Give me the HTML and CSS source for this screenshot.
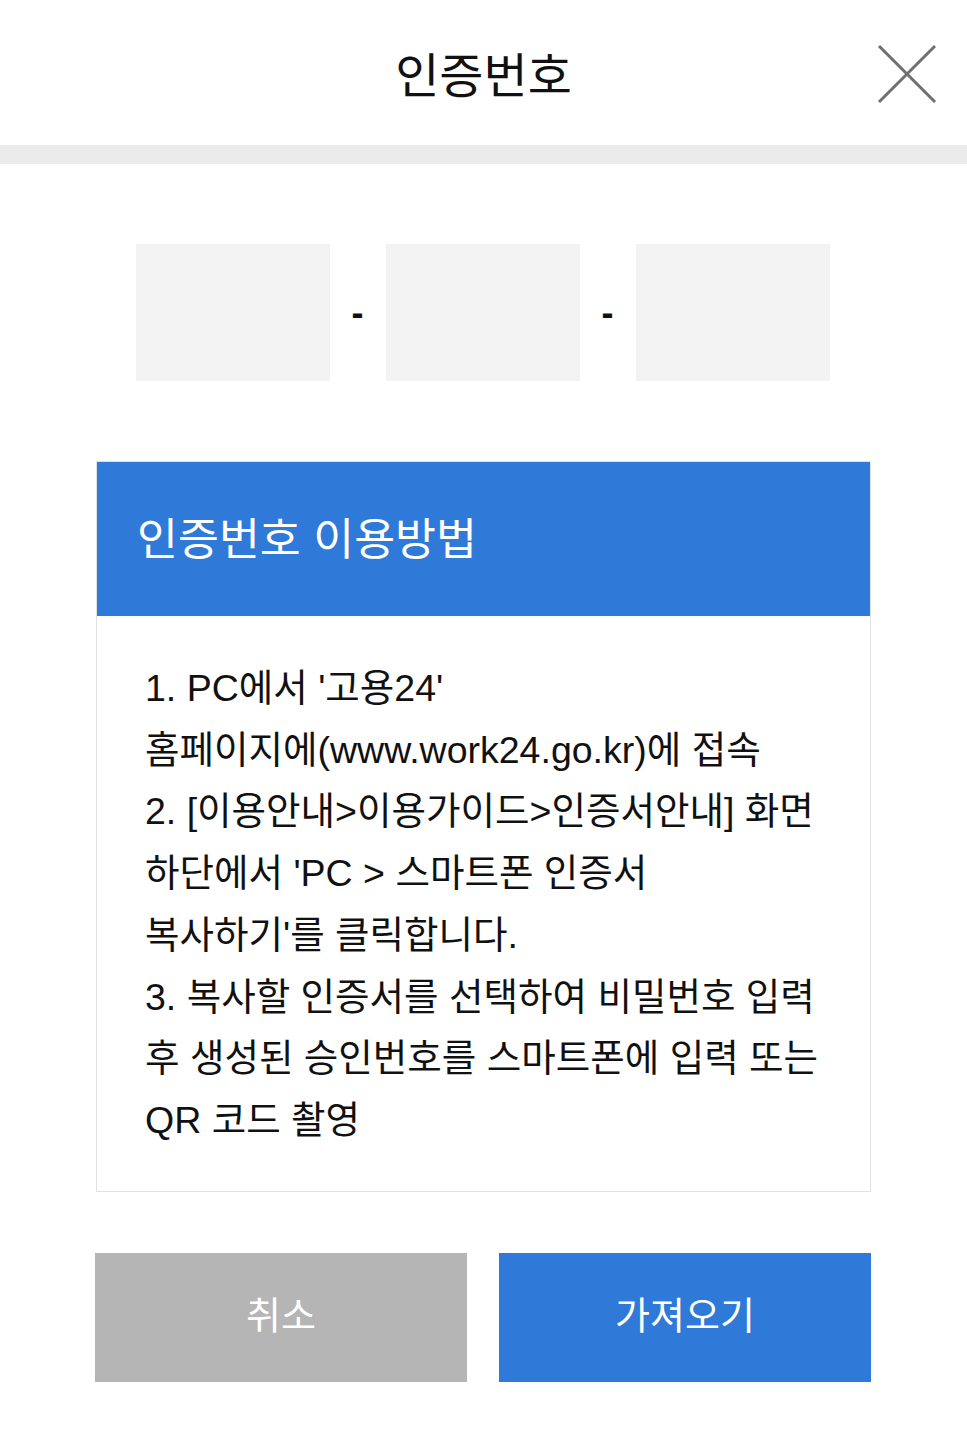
FILE: index.html
```html
<!doctype html>
<html lang="ko">
<head>
<meta charset="UTF-8">
<title>인증번호</title>
<meta name="viewport" content="width=device-width, initial-scale=1.0">
<link rel="stylesheet" href="styles.css">
</head>
<body>
  <!--상단 제목-->
  <div class="top-bar">
    <h1 class="top-title">인증번호</h1>
    <button class="btn-close" type="button" aria-label="닫기">
      <svg width="60" height="60" viewBox="0 0 60 60">
        <path d="M2 2 L58 58 M58 2 L2 58" stroke="#6f6f6f" stroke-width="3" fill="none"/>
      </svg>
    </button>
  </div>
  <div class="top-line"></div>

  <!--인증번호 입력-->
  <div class="code-row">
    <input class="code-box" type="text" maxlength="4">
    <span class="code-dash">-</span>
    <input class="code-box" type="text" maxlength="4">
    <span class="code-dash">-</span>
    <input class="code-box" type="text" maxlength="4">
  </div>

  <!--이용방법 안내-->
  <div class="guide">
    <div class="guide-head">인증번호 이용방법</div>
    <div class="guide-body">
      <p>1. PC에서 '고용24' <span class="nobr">홈페이지에(www.work24.go.kr)에</span> 접속</p>
      <p>2. [이용안내&gt;이용가이드&gt;인증서안내] 화면 하단에서 'PC &gt; 스마트폰 인증서 복사하기'를 클릭합니다.</p>
      <p>3. 복사할 인증서를 선택하여 비밀번호 입력 후 생성된 승인번호를 스마트폰에 입력 또는 QR 코드 촬영</p>
    </div>
  </div>

  <!--하단 버튼-->
  <div class="btn-row">
    <button class="btn btn-cancel" type="button">취소</button>
    <button class="btn btn-ok" type="button">가져오기</button>
  </div>
</body>
</html>
```

FILE: styles.css
```css
*{
	box-sizing: border-box;
}
html, body{
	margin:0;
	padding:0;
	background:#fff;
}
body{
	width:967px;
	font-family:"Liberation Sans", "Noto Sans CJK KR", sans-serif;
	color:#111;
}
.top-bar{
	height:145px;
	display:flex;
	align-items:center;
	justify-content:center;
	position:relative;
}
.top-title{
	margin:0;
	font-family:"Noto Sans CJK KR", sans-serif;
	font-weight:400;
	font-size:48px;
	color:#111;
	padding-bottom:2px;
}
.btn-close{
	position:absolute;
	right:30px;
	top:44px;
	width:60px;
	height:60px;
	padding:0;
	border:0;
	background:none;
}
.btn-close svg{
	display:block;
}
.top-line{
	height:19px;
	background:#ebebeb;
}
.code-row{
	display:flex;
	align-items:center;
	justify-content:center;
	padding:80px 0 0;
	margin-right:2px;
}
.code-box{
	width:194px;
	height:137px;
	border:0;
	background:#f3f3f3;
	outline:none;
	font-size:40px;
	text-align:center;
}
.code-dash{
	width:56px;
	text-align:center;
	font-size:36px;
	font-weight:700;
	color:#111;
}
.guide{
	margin:80px 96px 0 96px;
	border:1px solid #e2e2e2;
}
.guide-head{
	height:154px;
	background:#2f7ad9;
	color:#fff;
	font-family:"Noto Sans CJK KR", sans-serif;
	font-size:44.5px;
	display:flex;
	align-items:center;
	padding:0 40px 8px;
}
.guide-body{
	padding:42px 44px 39px 48px;
	font-size:37.5px;
	line-height:61.7px;
	word-break:keep-all;
}
.guide-body p{
	margin:0;
}
.nobr{
	white-space:nowrap;
}
.btn-row{
	display:flex;
	gap:32px;
	margin:61px 96px 0 95px;
}
.btn{
	flex:1;
	height:129px;
	border:0;
	color:#fff;
	font-family:"Noto Sans CJK KR", sans-serif;
	font-size:38px;
	padding:0 0 10px;
}
.btn-cancel{
	background:#b5b5b5;
}
.btn-ok{
	background:#2f7ad9;
}
```
